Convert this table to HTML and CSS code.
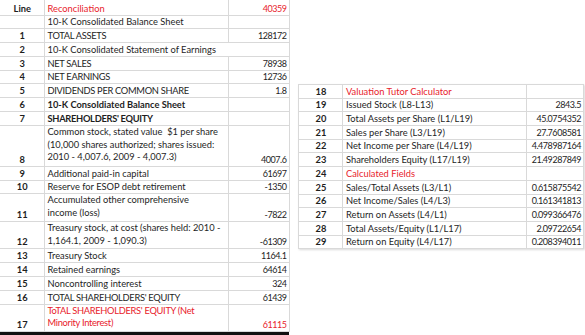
FILE: index.html
```html
<!DOCTYPE html>
<html lang="en">
<head>
    <meta charset="UTF-8">
    <title>Reconciliation</title>
    <link rel="stylesheet" href="styles.css">
</head>
<body>
    <div class="sheet">
        <!-- Reconciliation table -->
        <div class="left-block">
            <table class="grid recon">
                <colgroup>
                    <col class="c-line">
                    <col class="c-label">
                    <col class="c-value">
                </colgroup>
                <tr class="h-head">
                    <td class="num">Line</td>
                    <td class="red">Reconciliation</td>
                    <td class="val red">40359</td>
                </tr>
                <tr class="h1"><td class="num"></td><td>10-K Consolidated Balance Sheet</td><td></td></tr>
                <tr class="h1"><td class="num">1</td><td class="caps">TOTAL ASSETS</td><td class="val">128172</td></tr>
                <tr class="h1"><td class="num">2</td><td colspan="2">10-K Consolidated Statement of Earnings</td></tr>
                <tr class="h1"><td class="num">3</td><td class="caps">NET SALES</td><td class="val">78938</td></tr>
                <tr class="h1"><td class="num">4</td><td class="caps">NET EARNINGS</td><td class="val">12736</td></tr>
                <tr class="h1"><td class="num">5</td><td class="caps">DIVIDENDS PER COMMON SHARE</td><td class="val">1.8</td></tr>
                <tr class="h1"><td class="num">6</td><td class="bold">10-K Consoldiated Balance Sheet</td><td></td></tr>
                <tr class="h1"><td class="num">7</td><td class="bold caps">SHAREHOLDERS' EQUITY</td><td></td></tr>
                <tr class="h3">
                    <td class="num">8</td>
                    <td class="wrap">Common stock, stated value&nbsp; $1 per share<br>(10,000 shares authorized; shares issued:<br>2010 - 4,007.6, 2009 - 4,007.3)</td>
                    <td class="val">4007.6</td>
                </tr>
                <tr class="h1"><td class="num">9</td><td>Additional paid-in capital</td><td class="val">61697</td></tr>
                <tr class="h1"><td class="num">10</td><td>Reserve for ESOP debt retirement</td><td class="val">-1350</td></tr>
                <tr class="h2">
                    <td class="num">11</td>
                    <td class="wrap">Accumulated other comprehensive<br>income (loss)</td>
                    <td class="val">-7822</td>
                </tr>
                <tr class="h2">
                    <td class="num">12</td>
                    <td class="wrap">Treasury stock, at cost (shares held: 2010 -<br>1,164.1, 2009 - 1,090.3)</td>
                    <td class="val">-61309</td>
                </tr>
                <tr class="h1"><td class="num">13</td><td>Treasury Stock</td><td class="val">1164.1</td></tr>
                <tr class="h1"><td class="num">14</td><td>Retained earnings</td><td class="val">64614</td></tr>
                <tr class="h1"><td class="num">15</td><td>Noncontrolling interest</td><td class="val">324</td></tr>
                <tr class="h1"><td class="num">16</td><td class="caps">TOTAL SHAREHOLDERS' EQUITY</td><td class="val">61439</td></tr>
                <tr class="h2">
                    <td class="num">17</td>
                    <td class="wrap red caps">ToTAL SHAREHOLDERS' EQUITY (Net<br>Minority Interest)</td>
                    <td class="val red">61115</td>
                </tr>
            </table>
            <div class="edge"></div>
        </div>

        <!-- Valuation calculator -->
        <div class="right-block">
            <table class="grid calc">
                <colgroup>
                    <col class="c-line">
                    <col class="c-label">
                    <col class="c-calc">
                </colgroup>
                <tr><td class="num">18</td><td class="red">Valuation Tutor Calculator</td><td></td></tr>
                <tr><td class="num">19</td><td>Issued Stock (L8-L13)</td><td class="val">2843.5</td></tr>
                <tr><td class="num">20</td><td>Total Assets per Share (L1/L19)</td><td class="val">45.0754352</td></tr>
                <tr><td class="num">21</td><td>Sales per Share (L3/L19)</td><td class="val">27.7608581</td></tr>
                <tr><td class="num">22</td><td>Net Income per Share (L4/L19)</td><td class="val">4.478987164</td></tr>
                <tr><td class="num">23</td><td>Shareholders Equity (L17/L19)</td><td class="val">21.49287849</td></tr>
                <tr><td class="num">24</td><td class="red">Calculated Fields</td><td></td></tr>
                <tr><td class="num">25</td><td>Sales/Total Assets (L3/L1)</td><td class="val">0.615875542</td></tr>
                <tr><td class="num">26</td><td>Net Income/Sales (L4/L3)</td><td class="val">0.161341813</td></tr>
                <tr><td class="num">27</td><td>Return on Assets (L4/L1)</td><td class="val">0.099366476</td></tr>
                <tr><td class="num">28</td><td>Total Assets/Equity (L1/L17)</td><td class="val">2.09722654</td></tr>
                <tr><td class="num">29</td><td>Return on Equity (L4/L17)</td><td class="val">0.208394011</td></tr>
            </table>
        </div>
    </div>
</body>
</html>
```

FILE: styles.css
```css
* {
    margin: 0;
    padding: 0;
    box-sizing: border-box;
}

body {
    background-color: white;
    font-family: Lato, "Open Sans", sans-serif;
    font-size: 9.3px;
    color: #1e1e1e;
}

.sheet {
    display: flex;
    align-items: flex-start;
}

/* Shared grid styles */
.grid {
    border-collapse: collapse;
    table-layout: fixed;
}

.grid td {
    border: 1px solid #d9d9d9;
    padding: 0 2px 0 3px;
    vertical-align: bottom;
    white-space: nowrap;
    line-height: 12px;
    overflow: visible;
}

.grid .num {
    text-align: center;
    font-weight: bold;
}

.grid .val {
    text-align: right;
    padding: 0 2px 0 0;
    font-size: 9px;
    letter-spacing: -0.45px;
}

.grid .wrap {
    vertical-align: top;
    line-height: 12.8px;
}

.caps {
    letter-spacing: -0.3px;
}

.bold {
    font-weight: bold;
}

.red {
    color: #e8222b;
}

/* Left table */
.left-block {
    width: 289px;
}

.recon {
    width: 289px;
}

.recon td:first-child {
    border-left: none;
}

.recon tr:first-child td {
    border-top: none;
}

.c-line {
    width: 44px;
}

.c-label {
    width: 184px;
}

.c-value {
    width: 61px;
}

.h-head {
    height: 15px;
}

.h1 {
    height: 13.8px;
}

.h2 {
    height: 27.5px;
}

.h3 {
    height: 41px;
}

.edge {
    height: 3px;
    background-color: #111;
}

/* Right table */
.right-block {
    margin-left: 9px;
    margin-top: 84px;
}

.calc {
    width: 285px;
    border: 1px solid #c4c4c4;
    box-shadow: 1px 1px 2px rgba(0, 0, 0, 0.15);
}

.calc tr {
    height: 13.7px;
}

.c-calc {
    width: 57px;
}
```
